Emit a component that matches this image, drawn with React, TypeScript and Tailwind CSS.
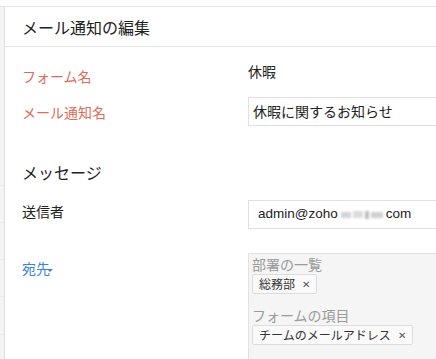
import React from "react";

const font = { fontFamily: '"Noto Sans CJK JP", "Noto Sans", sans-serif' };

function Chip({ text }: { text: string }) {
  return (
    <div className="inline-flex shrink-0 items-center h-[20px] px-[6px] gap-[7px] border border-[#dcdcdc] bg-[#fafafa] rounded-[2px] text-[12px] text-[#333] leading-none">
      <span>{text}</span>
      <span className="text-[10px] text-[#555]">✕</span>
    </div>
  );
}

export default function App() {
  return (
    <div className="w-[436px] h-[359px] overflow-hidden bg-white text-[#222]" style={font}>
      <div className="h-[7px] shrink-0 border-b border-[#e4e4e4]" />
      <div className="flex h-[352px] overflow-hidden">
        <div className="w-[5px] shrink-0 bg-[#f4f4f4] border-r border-[#dddddd] flex flex-col">
          <div className="h-[179px] shrink-0 border-b border-[#ececec]" />
          <div className="h-[37px] shrink-0 border-b border-[#ececec]" />
          <div className="h-[37px] shrink-0 border-b border-[#ececec]" />
          <div className="h-[37px] shrink-0 border-b border-[#ececec]" />
          <div className="h-[38px] shrink-0 border-b border-[#ececec]" />
        </div>
        <div className="flex-1 min-w-0 flex flex-col">
          <div className="h-[40px] shrink-0 border-b border-[#e4e4e4] flex items-center pl-[17px] text-[16px]">
            メール通知の編集
          </div>
          <div className="pl-[17px] flex flex-col shrink-0">
            <div className="flex mt-[14px] h-[20px] shrink-0">
              <div className="w-[226px] shrink-0 text-[14px] leading-[20px] text-[#dd6d58] pt-[5px]">フォーム名</div>
              <div className="text-[14px] leading-[20px]">休暇</div>
            </div>
            <div className="flex items-center mt-[16px] shrink-0">
              <div className="w-[226px] shrink-0 text-[14px] leading-[20px] text-[#dd6d58]">メール通知名</div>
              <div className="h-[29px] w-[260px] shrink-0 border border-[#e0e0e0] flex items-center pl-[4px] text-[14px]">
                休暇に関するお知らせ
              </div>
            </div>
            <div className="mt-[34px] text-[16px] leading-[24px] shrink-0">メッセージ</div>
            <div className="flex mt-[16px] shrink-0">
              <div className="w-[226px] shrink-0 text-[14px] leading-[20px] pt-[1px]">送信者</div>
              <div className="h-[29px] w-[260px] shrink-0 border border-[#e0e0e0] flex items-center pl-[9px] text-[13.5px]" style={{ fontFamily: '"Liberation Sans", "Noto Sans", sans-serif' }}>
                <span>admin@zoho</span>
                <span className="inline-flex items-center gap-[2px] mx-[3px]">
                  <span className="w-[10px] h-[6px] bg-[#d4d4d4] blur-[1px]" />
                  <span className="w-[10px] h-[7px] bg-[#dcdcdc] blur-[1px]" />
                  <span className="w-[4px] h-[8px] bg-[#bdbdbd] blur-[1px]" />
                  <span className="w-[12px] h-[6px] bg-[#d0d0d0] blur-[1px]" />
                </span>
                <span>com</span>
              </div>
            </div>
            <div className="flex mt-[24px] shrink-0">
              <div className="w-[226px] shrink-0 pt-[2px]">
                <span className="relative text-[14px] leading-[20px] text-[#3b82d4]">
                  宛先
                  <span className="absolute right-[-3px] top-[11px] w-0 h-0 border-l-[3px] border-r-[3px] border-t-[3px] border-l-transparent border-r-transparent border-t-[#3b82d4]" />
                </span>
              </div>
              <div className="w-[260px] h-[120px] shrink-0 bg-[#f5f5f5] border border-[#e2e2e2] pl-[3px] pt-0 flex flex-col items-start">
                <div className="text-[14px] leading-[20px] text-[#9a9a9a]">部署の一覧</div>
                <Chip text="総務部" />
                <div className="mt-[11px] text-[14px] leading-[20px] text-[#9a9a9a]">フォームの項目</div>
                <Chip text="チームのメールアドレス" />
              </div>
            </div>
          </div>
        </div>
      </div>
    </div>
  );
}
